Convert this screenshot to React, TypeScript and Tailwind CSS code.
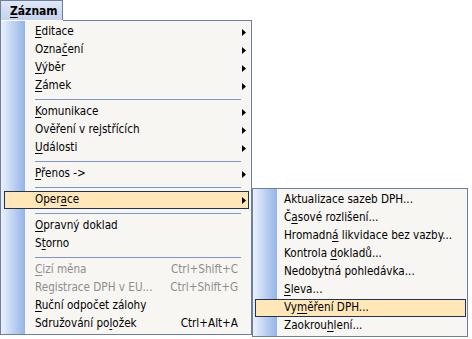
import React from "react";

const U = ({ c }: { c: string }) => (
  <span className="underline decoration-1 underline-offset-[2px]">{c}</span>
);

type Row =
  | { sep: true }
  | {
      sep?: false;
      label: React.ReactNode;
      arrow?: boolean;
      shortcut?: string;
      disabled?: boolean;
      hl?: boolean;
    };

const Arrow = () => (
  <svg width="4" height="7" viewBox="0 0 4 7" className="shrink-0">
    <path d="M0 0 L4 3.5 L0 7 Z" fill="#000" />
  </svg>
);

const mainRows: Row[] = [
  { label: <><U c="E" />ditace</>, arrow: true },
  { label: <>Ozna<U c="č" />ení</>, arrow: true },
  { label: <><U c="V" />ýběr</>, arrow: true },
  { label: <><U c="Z" />ámek</>, arrow: true },
  { sep: true },
  { label: <><U c="K" />omunikace</>, arrow: true },
  { label: <>Ověření v rejstřících</>, arrow: true },
  { label: <><U c="U" />dálosti</>, arrow: true },
  { sep: true },
  { label: <><U c="P" />řenos -&gt;</>, arrow: true },
  { sep: true },
  { label: <>Oper<U c="a" />ce</>, arrow: true, hl: true },
  { sep: true },
  { label: <><U c="O" />pravný doklad</> },
  { label: <>S<U c="t" />orno</> },
  { sep: true },
  { label: <><U c="C" />izí měna</>, shortcut: "Ctrl+Shift+C", disabled: true },
  { label: <>Registrace DPH v EU...</>, shortcut: "Ctrl+Shift+G", disabled: true },
  { label: <><U c="R" />uční odpočet zálohy</> },
  { label: <>Sdružování po<U c="l" />ožek</>, shortcut: "Ctrl+Alt+A" },
];

const subRows: Row[] = [
  { label: <>Aktualizace sazeb DPH...</> },
  { label: <>Č<U c="a" />sové rozlišení...</> },
  { label: <>Hromadn<U c="á" /> likvidace bez vazby...</> },
  { label: <>Kontrola <U c="d" />okladů...</> },
  { label: <>Nedobytná pohledávka...</> },
  { label: <><U c="S" />leva...</> },
  { label: <>Vy<U c="m" />ěření DPH...</>, hl: true },
  { label: <>Zaokrou<U c="h" />lení...</> },
];

function MenuRows({ rows, sub }: { rows: Row[]; sub?: boolean }) {
  return (
    <>
      {rows.map((r, i) =>
        r.sep ? (
          <div key={i} className="h-[8px] flex items-center pl-[34px] pr-[10px]">
            <div className="h-px w-full bg-[#7c98c8]" />
          </div>
        ) : (
          <div
            key={i}
            className={
              "h-[18px] flex items-center border " +
              (sub ? "ml-[2px] mr-[1px] pl-[28px] " : "ml-[3px] mr-[2px] pl-[30px] pr-[1px] ") +
              (r.hl ? "bg-[#ffe7b8] border-[#223254]" : "border-transparent")
            }
          >
            <span
              className={
                "flex-1 whitespace-nowrap " +
                (r.disabled ? "text-[#8e8e8e]" : "text-black")
              }
            >
              {r.label}
            </span>
            {r.shortcut && (
              <span
                className={
                  "whitespace-nowrap pr-[9px] " +
                  (r.disabled ? "text-[#8e8e8e]" : "text-black")
                }
              >
                {r.shortcut}
              </span>
            )}
            {r.arrow && (
              <span className="pr-[1px] flex items-center">
                <Arrow />
              </span>
            )}
          </div>
        )
      )}
    </>
  );
}

export default function App() {
  return (
    <div
      className="relative w-[472px] h-[339px] bg-white text-[11.6px] leading-none overflow-hidden"
      style={{ fontFamily: "'DejaVu Sans Condensed', 'Liberation Sans', sans-serif" }}
    >
      {/* Top-level tab */}
      <div className="w-[63px] h-[20px] border-l border-t border-r border-[#6d7e9e] bg-[linear-gradient(180deg,#dfe7f6,#c4d2ee)] flex items-center pl-[9px] font-bold text-[12px]">
        <span>
          <U c="Z" />áznam
        </span>
      </div>
      {/* Main dropdown */}
      <div className="w-[252px] flex flex-col border-l border-r border-b border-[#6d7e9e]">
        <div className="flex h-px">
          <div className="w-[62px]" />
          <div className="flex-1 bg-[#6d7e9e]" />
        </div>
        <div className="pt-[2px] pb-[1px] bg-[linear-gradient(90deg,#eaf1fd_0px,#94b4e6_24px,#f7f6f3_24px)]">
          <MenuRows rows={mainRows} />
        </div>
      </div>
      {/* Submenu */}
      <div className="absolute left-[252px] top-[188px] w-[216px] border border-[#6d7e9e] pt-[2px] pb-[1px] bg-[linear-gradient(90deg,#eaf1fd_0px,#94b4e6_24px,#f7f6f3_24px)]">
        <MenuRows rows={subRows} sub />
      </div>
    </div>
  );
}
